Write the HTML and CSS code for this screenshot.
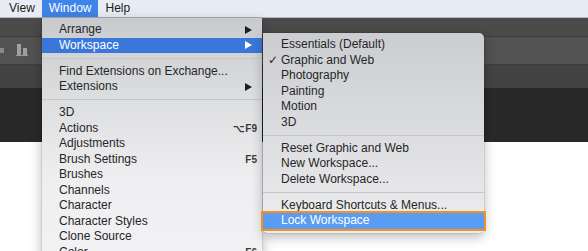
FILE: index.html
```html
<!DOCTYPE html>
<html lang="en">
<head>
  <meta charset="UTF-8" />
  <title>Window Menu - Workspace</title>
  <link rel="stylesheet" href="styles.css">
</head>
<body>

  <div class="menubar">
    <span class="menubar-item">View</span>
    <span class="menubar-item active">Window</span>
    <span class="menubar-item">Help</span>
  </div>

  <div class="app">
    <div class="app-bar"></div>
    <div class="options-bar">
      <span class="icon-square"></span>
      <span class="icon-bars">
        <span class="bar tall"></span>
        <span class="bar short"></span>
      </span>
    </div>
    <div class="tabs-bar"></div>
    <div class="pasteboard"></div>
    <div class="canvas"></div>
  </div>

  <!-- Window menu -->
  <div class="menu window-menu">
    <div class="item">Arrange<span class="arrow"></span></div>
    <div class="item selected">Workspace<span class="arrow"></span></div>
    <div class="sep"></div>
    <div class="item">Find Extensions on Exchange...</div>
    <div class="item">Extensions<span class="arrow"></span></div>
    <div class="sep"></div>
    <div class="item">3D</div>
    <div class="item">Actions<span class="key">⌥F9</span></div>
    <div class="item">Adjustments</div>
    <div class="item">Brush Settings<span class="key">F5</span></div>
    <div class="item">Brushes</div>
    <div class="item">Channels</div>
    <div class="item">Character</div>
    <div class="item">Character Styles</div>
    <div class="item">Clone Source</div>
    <div class="item">Color<span class="key">F6</span></div>
  </div>

  <!-- Workspace submenu -->
  <div class="menu submenu">
    <div class="item"><span class="check"></span>Essentials (Default)</div>
    <div class="item"><span class="check">✓</span>Graphic and Web</div>
    <div class="item"><span class="check"></span>Photography</div>
    <div class="item"><span class="check"></span>Painting</div>
    <div class="item"><span class="check"></span>Motion</div>
    <div class="item"><span class="check"></span>3D</div>
    <div class="sep"></div>
    <div class="item"><span class="check"></span>Reset Graphic and Web</div>
    <div class="item"><span class="check"></span>New Workspace...</div>
    <div class="item"><span class="check"></span>Delete Workspace...</div>
    <div class="sep"></div>
    <div class="item"><span class="check"></span>Keyboard Shortcuts &amp; Menus...</div>
    <div class="item hover marked"><span class="check"></span>Lock Workspace</div>
  </div>

</body>
</html>
```

FILE: styles.css
```css
body {
  margin: 0;
  width: 588px;
  height: 251px;
  overflow: hidden;
  position: relative;
  font-family: 'Liberation Sans', Arial, sans-serif;
  font-size: 12px;
  color: #262626;
  background: #fff;
}
.menubar {
  height: 18px;
  box-sizing: border-box;
  background: #e8edf5;
  border-bottom: 1px solid #b4bac3;
  display: flex;
  padding-left: 2px;
}
.menubar-item {
  padding: 0 7px;
  line-height: 17px;
  color: #222;
}
.menubar-item.active {
  background: #3f84e8;
  color: #fff;
}
.app-bar {
  height: 19px;
  background: #4b4b4b;
  border-bottom: 1px solid #3c3c3c;
  box-sizing: border-box;
}
.options-bar {
  height: 28px;
  background: #525252;
  border-bottom: 1px solid #3e3e3e;
  box-sizing: border-box;
  display: flex;
  align-items: flex-end;
  gap: 12px;
  padding-bottom: 8px;
}
.icon-square {
  width: 4px;
  height: 5px;
  background: #8a8a8a;
  margin-bottom: 3px;
}
.icon-bars {
  display: flex;
  align-items: flex-end;
  gap: 2px;
  padding: 0 1px;
  border-bottom: 1px solid #9a9a9a;
}
.bar {
  width: 4px;
  background: #a0a0a0;
}
.bar.tall { height: 11px; }
.bar.short { height: 7px; }
.tabs-bar {
  height: 23px;
  background: #434343;
}
.pasteboard {
  height: 54px;
  background: #292929;
}
.canvas {
  height: 120px;
  background: #fff;
}
.menu {
  position: absolute;
  box-sizing: border-box;
  box-shadow: 0 4px 12px rgba(0, 0, 0, 0.28), 0 0 0 0.5px rgba(0, 0, 0, 0.15);
}
.window-menu {
  left: 42px;
  top: 18px;
  width: 220px;
  height: 260px;
  padding-top: 4px;
  background: linear-gradient(#c9cacd 0%, #dcdddf 30%, #eeeef0 60%, #f3f3f5 100%);
}
.submenu {
  left: 263px;
  top: 33px;
  width: 221px;
  padding: 4px 0 4px;
  border-radius: 0 5px 5px 5px;
  background: linear-gradient(#cbcdd1 0%, #dadbde 45%, #eeeeef 100%);
}
.item {
  height: 15.5px;
  line-height: 15.5px;
  display: flex;
  align-items: center;
  white-space: nowrap;
}
.window-menu .item {
  padding: 0 5px 0 17px;
}
.submenu .item {
  padding: 0 5px 0 5px;
}
.item.selected {
  background: #3a77da;
  color: #fff;
}
.item.hover {
  background: #5a9bf4;
  color: #fff;
}
.item.marked {
  outline: 2px solid #f3921f;
  position: relative;
}
.check {
  width: 13px;
  font-family: 'DejaVu Sans', sans-serif;
  font-size: 12px;
}
.arrow {
  margin-left: auto;
  margin-right: 5px;
  width: 0;
  height: 0;
  border-top: 4px solid transparent;
  border-bottom: 4px solid transparent;
  border-left: 7px solid #1e1e1e;
}
.item.selected .arrow {
  border-left-color: #fff;
}
.key {
  margin-left: auto;
  font-size: 10px;
  font-weight: bold;
  color: #3a3a3a;
}
.sep {
  height: 1px;
  background: #c6c6c8;
  margin: 4.5px 0 5px;
}
```
